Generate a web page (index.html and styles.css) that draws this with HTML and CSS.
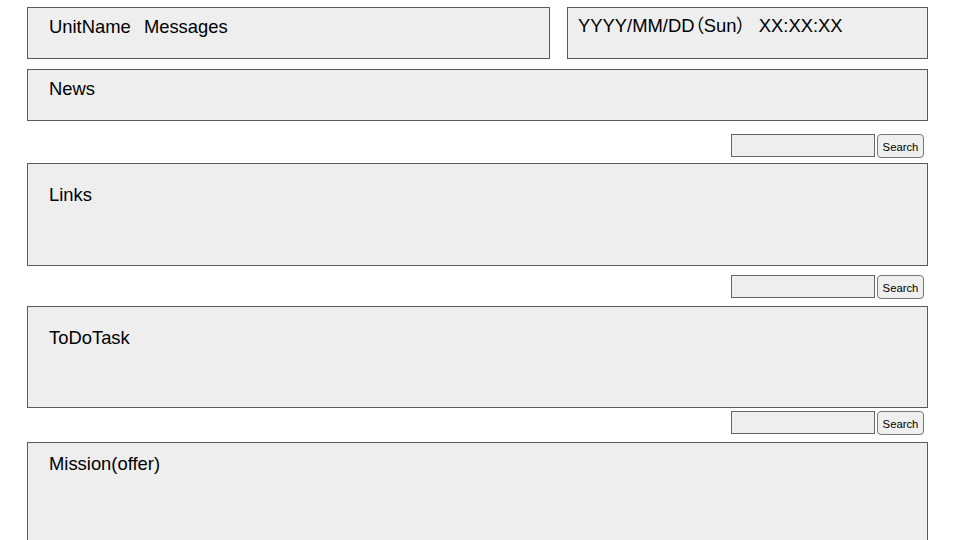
FILE: index.html
```html
<!DOCTYPE html>
<html lang="ja">
<head>
<meta charset="utf-8">
<title>Portal</title>
<link rel="stylesheet" href="styles.css">
</head>
<body>
<div class="page">
  <div class="top-row">
    <div class="box unit">UnitName <span class="msg">Messages</span></div>
    <div class="box date">YYYY/MM/DD<span class="paren">（</span>Sun<span class="paren">）</span> <span class="time">XX:XX:XX</span></div>
  </div>
  <div class="box news">News</div>
  <div class="search s1"><input class="field" type="text"><button class="btn" type="button">Search</button></div>
  <div class="box panel links">Links</div>
  <div class="search s2"><input class="field" type="text"><button class="btn" type="button">Search</button></div>
  <div class="box panel todo">ToDoTask</div>
  <div class="search s3"><input class="field" type="text"><button class="btn" type="button">Search</button></div>
  <div class="box mission">Mission(offer)</div>
</div>
</body>
</html>
```
FILE: styles.css
```css
html, body {
  margin: 0;
  padding: 0;
  background: #ffffff;
  overflow: hidden;
}
body {
  font-family: "Liberation Sans", Arial, "Noto Sans CJK JP", sans-serif;
  color: #000;
}
.page {
  width: 901px;
  height: 540px;
  padding: 7px 0 0 27px;
  overflow: hidden;
}
.box {
  box-sizing: border-box;
  border: 1px solid #5a5a5a;
  background: #eeeeee;
  font-size: 18.4px;
  line-height: 20px;
  padding-left: 21px;
}
.top-row {
  display: flex;
  gap: 17px;
}
.unit {
  width: 523px;
  height: 52px;
  padding-top: 9px;
}
.msg {
  margin-left: 8px;
}
.date {
  width: 361px;
  height: 52px;
  padding-top: 8px;
  padding-left: 10px;
  font-feature-settings: "palt";
}
.paren {
  font-family: "Noto Sans CJK JP", sans-serif;
  line-height: 0;
}
.time {
  margin-left: 8px;
}
.news {
  height: 52px;
  margin-top: 10px;
  padding-top: 9px;
}
.panel {
  padding-top: 21px;
}
.links {
  height: 103px;
  margin-top: 5px;
}
.todo {
  height: 102px;
  margin-top: 7px;
}
.mission {
  height: 100px;
  margin-top: 7px;
  padding-top: 11px;
}
.search {
  display: flex;
  justify-content: flex-end;
  align-items: flex-start;
  gap: 2px;
  padding-right: 4px;
  height: 24px;
}
.s1 { margin-top: 13px; }
.s2 { margin-top: 9px; }
.s3 { margin-top: 3px; }
.field {
  box-sizing: border-box;
  width: 144px;
  height: 23px;
  margin: 0;
  padding: 0 4px;
  border: 1px solid #666666;
  border-radius: 0;
  background: #eeeeee;
  outline: none;
}
.btn {
  box-sizing: border-box;
  width: 47px;
  height: 24px;
  margin: 0;
  padding: 2px 0 0 0;
  border: 1px solid #777777;
  border-radius: 4px;
  background: #efefef;
  font-family: "Liberation Sans", Arial, sans-serif;
  font-size: 11.3px;
  color: #000;
}
```
